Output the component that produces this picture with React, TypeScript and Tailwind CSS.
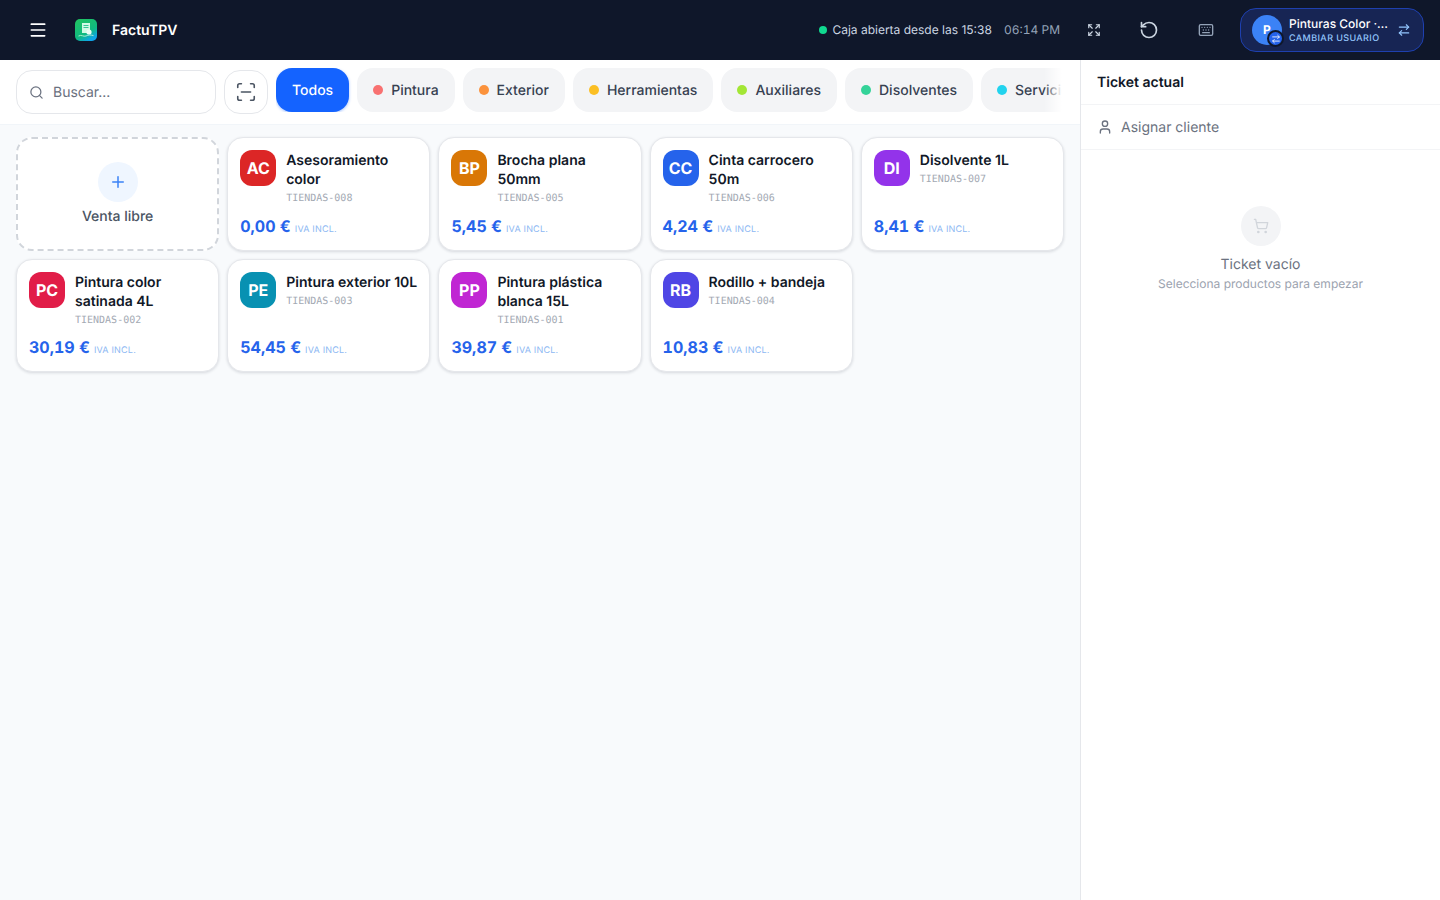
import { ArrowRightLeft, Expand, Keyboard, Menu, Plus, RotateCcw, ScanLine, Search, ShoppingCart, User } from 'lucide-react';

const categories = [
  { name: 'Pintura', dot: 'bg-[#f87171]' },
  { name: 'Exterior', dot: 'bg-[#fb923c]' },
  { name: 'Herramientas', dot: 'bg-[#fbbf24]' },
  { name: 'Auxiliares', dot: 'bg-[#a3e635]' },
  { name: 'Disolventes', dot: 'bg-[#34d399]' },
  { name: 'Servicios', dot: 'bg-[#22d3ee]' },
];

const products = [
  { code: 'AC', name: 'Asesoramiento color', sku: 'TIENDAS-008', price: '0,00 €', color: 'bg-[#dc2626]' },
  { code: 'BP', name: 'Brocha plana 50mm', sku: 'TIENDAS-005', price: '5,45 €', color: 'bg-[#d97706]' },
  { code: 'CC', name: 'Cinta carrocero 50m', sku: 'TIENDAS-006', price: '4,24 €', color: 'bg-[#2563eb]' },
  { code: 'DI', name: 'Disolvente 1L', sku: 'TIENDAS-007', price: '8,41 €', color: 'bg-[#9333ea]' },
  { code: 'PC', name: 'Pintura color satinada 4L', sku: 'TIENDAS-002', price: '30,19 €', color: 'bg-[#e11d48]' },
  { code: 'PE', name: 'Pintura exterior 10L', sku: 'TIENDAS-003', price: '54,45 €', color: 'bg-[#0891b2]' },
  { code: 'PP', name: 'Pintura plástica blanca 15L', sku: 'TIENDAS-001', price: '39,87 €', color: 'bg-[#c026d3]' },
  { code: 'RB', name: 'Rodillo + bandeja', sku: 'TIENDAS-004', price: '10,83 €', color: 'bg-[#4f46e5]' },
];

function Logo() {
  return (
    <svg width="22" height="22" viewBox="0 0 22 22">
      <defs>
        <linearGradient id="logo-bg" x1="0" y1="0" x2="0.6" y2="1">
          <stop offset="0" stopColor="#22c55e" />
          <stop offset="0.7" stopColor="#10b981" />
          <stop offset="1" stopColor="#0ea5e9" />
        </linearGradient>
      </defs>
      <rect width="22" height="22" rx="5" fill="url(#logo-bg)" />
      <path d="M7 4h8v10H7z" fill="#d1fae5" />
      <path d="M8.5 6.5h5M8.5 8.5h5" stroke="#10b981" strokeWidth="0.8" />
      <circle cx="14" cy="13" r="2.6" fill="#ecfdf5" />
      <path d="M3.5 17c3-1.6 5 1 7.5 0s4-1.4 7.5-.4" stroke="#d1fae5" strokeWidth="0.8" fill="none" />
    </svg>
  );
}

function ProductCard({ code, name, sku, price, color }: (typeof products)[number]) {
  return (
    <div className="flex flex-col justify-between rounded-2xl border border-[#e5e7eb] bg-white px-3 pt-3 pb-3 shadow-[0_1px_3px_rgba(15,23,42,0.14)]">
      <div className="flex gap-[10px]">
        <div className={`flex h-9 w-9 shrink-0 items-center justify-center rounded-xl text-[16px] font-bold text-white ${color}`}>
          {code}
        </div>
        <div className="mt-[1px] min-w-0">
          <div className="text-[14px] leading-[19px] font-semibold text-[#111827]">{name}</div>
          <div className="mt-[2px] font-['DejaVu_Sans_Mono',monospace] text-[10px] leading-[15px] text-[#a3a9b3]">{sku}</div>
        </div>
      </div>
      <div className="mt-[7.6px] flex items-baseline gap-1">
        <span className="text-[16px] leading-[24px] font-bold text-[#2563eb] tabular-nums">{price}</span>
        <span className="text-[9px] tracking-[0.2px] text-[#8db8f3]">IVA INCL.</span>
      </div>
    </div>
  );
}

export default function App() {
  return (
    <div className="flex h-[900px] w-[1440px] flex-col overflow-hidden bg-white font-['Inter',sans-serif] antialiased [text-rendering:geometricPrecision]">
      <header className="flex h-[60px] shrink-0 items-center bg-[#0f172a] pr-4 pl-7">
        <Menu size={20} className="text-white" />
        <div className="ml-[27px] flex items-center gap-[15px]">
          <Logo />
          <span className="text-[14px] font-semibold text-white">FactuTPV</span>
        </div>
        <div className="ml-auto flex items-center">
          <span className="h-2 w-2 rounded-full bg-[#10d990]" />
          <span className="ml-[5px] text-[12px] text-[#cbd5e1]">Caja abierta desde las 15:38</span>
          <span className="ml-[12px] text-[12px] text-[#94a3b8] tabular-nums">06:14 PM</span>
          <Expand size={14} className="ml-[27px] text-[#cbd5e1]" />
          <RotateCcw size={20} className="ml-[38px] text-[#cbd5e1]" />
          <Keyboard size={16} className="ml-[39px] text-[#94a3b8]" />
          <div className="ml-[26px] flex h-11 w-[184px] items-center rounded-2xl border border-[#1e40af] bg-[#172554] pr-3 pl-[11px]">
            <div className="relative h-[30px] w-[30px] shrink-0 rounded-full bg-[#3b82f6]">
              <span className="absolute inset-0 flex items-center justify-center text-[12px] font-bold text-white">P</span>
              <span className="absolute -right-[2px] -bottom-[2px] flex h-[17px] w-[17px] items-center justify-center rounded-full border-2 border-[#0f172a] bg-[#2563eb]">
                <ArrowRightLeft size={10} className="text-white" />
              </span>
            </div>
            <div className="ml-[7px] min-w-0 flex-1">
              <div className="text-[12px] leading-[15px] font-medium whitespace-nowrap text-white">Pinturas Color ·…</div>
              <div className="mt-[2px] text-[9px] leading-[12px] font-medium tracking-[0.4px] whitespace-nowrap text-[#93c5fd]">CAMBIAR USUARIO</div>
            </div>
            <ArrowRightLeft size={14} className="shrink-0 text-[#93c5fd]" />
          </div>
        </div>
      </header>

      <div className="flex min-h-0 flex-1">
        <main className="flex w-[1081px] shrink-0 flex-col border-r border-[#e5e7eb] bg-[#f8fafc]">
          <div className="flex h-[65px] shrink-0 items-start gap-2 border-b border-[#f1f5f9] bg-white pt-2 pl-4">
            <div className="mt-[2px] flex h-11 w-[200px] shrink-0 items-center gap-2 rounded-2xl border border-[#e5e7eb] bg-white pl-3">
              <Search size={15} className="text-[#6b7280]" />
              <span className="ml-[1px] text-[14px] text-[#6b7280]">Buscar...</span>
            </div>
            <div className="mt-[2px] flex h-11 w-11 shrink-0 items-center justify-center rounded-2xl border border-[#e5e7eb] bg-white">
              <ScanLine size={22} strokeWidth={1.75} className="text-[#4b5563]" />
            </div>
            <div className="relative flex min-w-0 flex-1 gap-2 overflow-hidden pr-5">
              <div className="flex h-11 shrink-0 items-center rounded-2xl bg-[#1463ff] px-4 text-[14px] font-medium text-white shadow-[0_1px_3px_rgba(20,99,255,0.4)]">
                Todos
              </div>
              {categories.map((c) => (
                <div key={c.name} className="flex h-11 shrink-0 items-center gap-2 rounded-2xl bg-[#f3f4f6] px-4 text-[14px] font-medium text-[#374151]">
                  <span className={`h-[10px] w-[10px] rounded-full ${c.dot}`} />
                  {c.name}
                </div>
              ))}
              <div className="absolute top-0 right-0 h-11 w-[36px] bg-gradient-to-l from-white via-white to-transparent" />
            </div>
          </div>

          <div className="grid grid-cols-5 auto-rows-min gap-2 px-4 pt-3">
            <div className="flex flex-col items-center justify-center rounded-2xl border-2 border-dashed border-[#d1d5db] bg-white pt-[2px]">
              <div className="flex h-10 w-10 items-center justify-center rounded-full bg-[#eff6ff]">
                <Plus size={18} className="text-[#3b82f6]" />
              </div>
              <span className="mt-[4px] text-[14px] font-medium text-[#4b5563]">Venta libre</span>
            </div>
            {products.map((p) => (
              <ProductCard key={p.code} {...p} />
            ))}
          </div>
        </main>

        <aside className="flex min-w-0 flex-1 flex-col bg-white">
          <div className="flex h-[45px] shrink-0 items-center border-b border-[#f3f4f6] px-4 text-[14px] font-semibold text-[#111827]">
            Ticket actual
          </div>
          <div className="flex h-[45px] shrink-0 items-center gap-2 border-b border-[#f3f4f6] px-4 text-[14px] text-[#6b7280]">
            <User size={16} className="text-[#6b7280]" />
            <span>Asignar cliente</span>
          </div>
          <div className="flex flex-col items-center pt-[56px]">
            <div className="flex h-10 w-10 items-center justify-center rounded-full bg-[#f3f4f6]">
              <ShoppingCart size={16} className="text-[#d1d5db]" />
            </div>
            <div className="mt-[8px] text-[14px] text-[#6b7280]">Ticket vacío</div>
            <div className="text-[12px] text-[#9ca3af]">Selecciona productos para empezar</div>
          </div>
        </aside>
      </div>
    </div>
  );
}
